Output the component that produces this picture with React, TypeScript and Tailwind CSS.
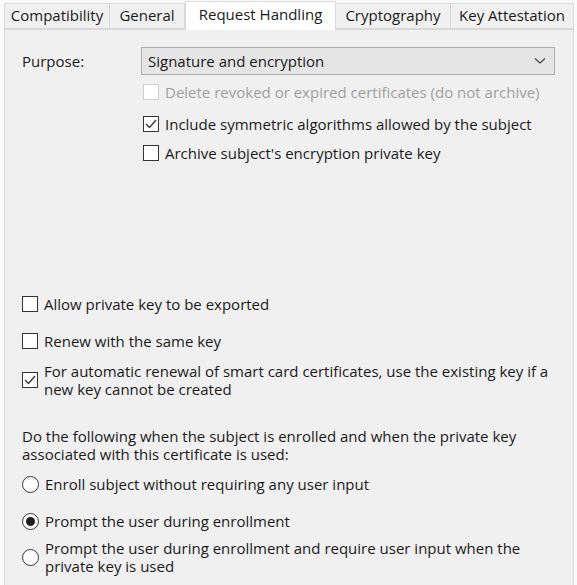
import React from "react";

const FONT = { fontFamily: '"Segoe UI", "Open Sans", "Liberation Sans", sans-serif' };

const tabs = ["Compatibility", "General", "Request Handling", "Cryptography", "Key Attestation"];
const tabWidths = ["w-[106px]", "w-[75px]", "w-[151px]", "w-[115px]", "w-[123px]"];

function Checkbox({ checked, disabled }: { checked?: boolean; disabled?: boolean }) {
  return (
    <div
      className={`w-[16px] h-[16px] shrink-0 border ${disabled ? "border-[#cfcfcf]" : "border-[#333333]"} bg-white flex items-center justify-center`}
    >
      {checked && (
        <svg width="12" height="10" viewBox="0 0 12 10" fill="none">
          <path d="M1 5 L4.5 8.5 L11 1" stroke="#333" strokeWidth="1.3" />
        </svg>
      )}
    </div>
  );
}

function Radio({ checked }: { checked?: boolean }) {
  return (
    <div className="w-[17px] h-[17px] shrink-0 rounded-full border border-[#333333] bg-white flex items-center justify-center">
      {checked && <div className="w-[9px] h-[9px] rounded-full bg-[#1f1f1f]" />}
    </div>
  );
}

export default function App() {
  return (
    <div className="w-[577px] h-[585px] overflow-hidden bg-[#fafafa] text-[15px] text-[#1a1a1a]" style={FONT}>
      {/* tab strip */}
      <div className="flex items-end h-[29px] pl-[4px] relative z-10">
        {tabs.map((t, i) =>
          i === 2 ? (
            <div
              key={t}
              className={`${tabWidths[i]} h-[29px] -mb-[1px] bg-white border border-b-0 border-[#d9d9d9] flex items-center justify-center pb-[3px]`}
            >
              {t}
            </div>
          ) : (
            <div
              key={t}
              className={`${tabWidths[i]} h-[26px] bg-[#f0f0f0] border border-[#d9d9d9] ${i > 0 ? "border-l-0" : ""} flex items-center justify-center pb-[1px]`}
            >
              {t}
            </div>
          )
        )}
      </div>

      {/* panel */}
      <div className="ml-[4px] w-[570px] h-[560px] border border-[#d9d9d9] bg-[#f0f0f0] pl-[17px] pr-[17px]">
        <div className="flex items-center mt-[17px]">
          <div className="w-[119px]">Purpose:</div>
          <div className="w-[414px] h-[28px] bg-[#e5e5e5] border border-[#adadad] flex items-center justify-between pl-[6px] pr-[8px]">
            <span>Signature and encryption</span>
            <svg width="12" height="8" viewBox="0 0 12 8" fill="none">
              <path d="M1 1.5 L6 6 L11 1.5" stroke="#444" strokeWidth="1.2" />
            </svg>
          </div>
        </div>

        <div className="ml-[121px] mt-[5px] flex flex-col">
          <div className="flex items-center gap-[6px] h-[24px]">
            <Checkbox disabled />
            <span className="text-[#a0a0a0]">Delete revoked or expired certificates (do not archive)</span>
          </div>
          <div className="flex items-center gap-[6px] h-[24px] mt-[8px]">
            <Checkbox checked />
            <span>Include symmetric algorithms allowed by the subject</span>
          </div>
          <div className="flex items-center gap-[6px] h-[24px] mt-[5px]">
            <Checkbox />
            <span>Archive subject's encryption private key</span>
          </div>
        </div>

        <div className="flex flex-col mt-[127px]">
          <div className="flex items-center gap-[6px] h-[24px]">
            <Checkbox />
            <span>Allow private key to be exported</span>
          </div>
          <div className="flex items-center gap-[6px] h-[24px] mt-[13px]">
            <Checkbox />
            <span>Renew with the same key</span>
          </div>
          <div className="flex items-center gap-[6px] mt-[9px] leading-[18px]">
            <Checkbox checked />
            <span>
              For automatic renewal of smart card certificates, use the existing key if a
              <br />
              new key cannot be created
            </span>
          </div>
        </div>

        <div className="mt-[29px] leading-[18px]">
          Do the following when the subject is enrolled and when the private key
          <br />
          associated with this certificate is used:
        </div>

        <div className="flex flex-col mt-[9px]">
          <div className="flex items-center gap-[6px] h-[24px]">
            <Radio />
            <span>Enroll subject without requiring any user input</span>
          </div>
          <div className="flex items-center gap-[6px] h-[24px] mt-[13px]">
            <Radio checked />
            <span>Prompt the user during enrollment</span>
          </div>
          <div className="flex items-center gap-[6px] mt-[6px] leading-[18px]">
            <Radio />
            <span>
              Prompt the user during enrollment and require user input when the
              <br />
              private key is used
            </span>
          </div>
        </div>
      </div>
    </div>
  );
}
